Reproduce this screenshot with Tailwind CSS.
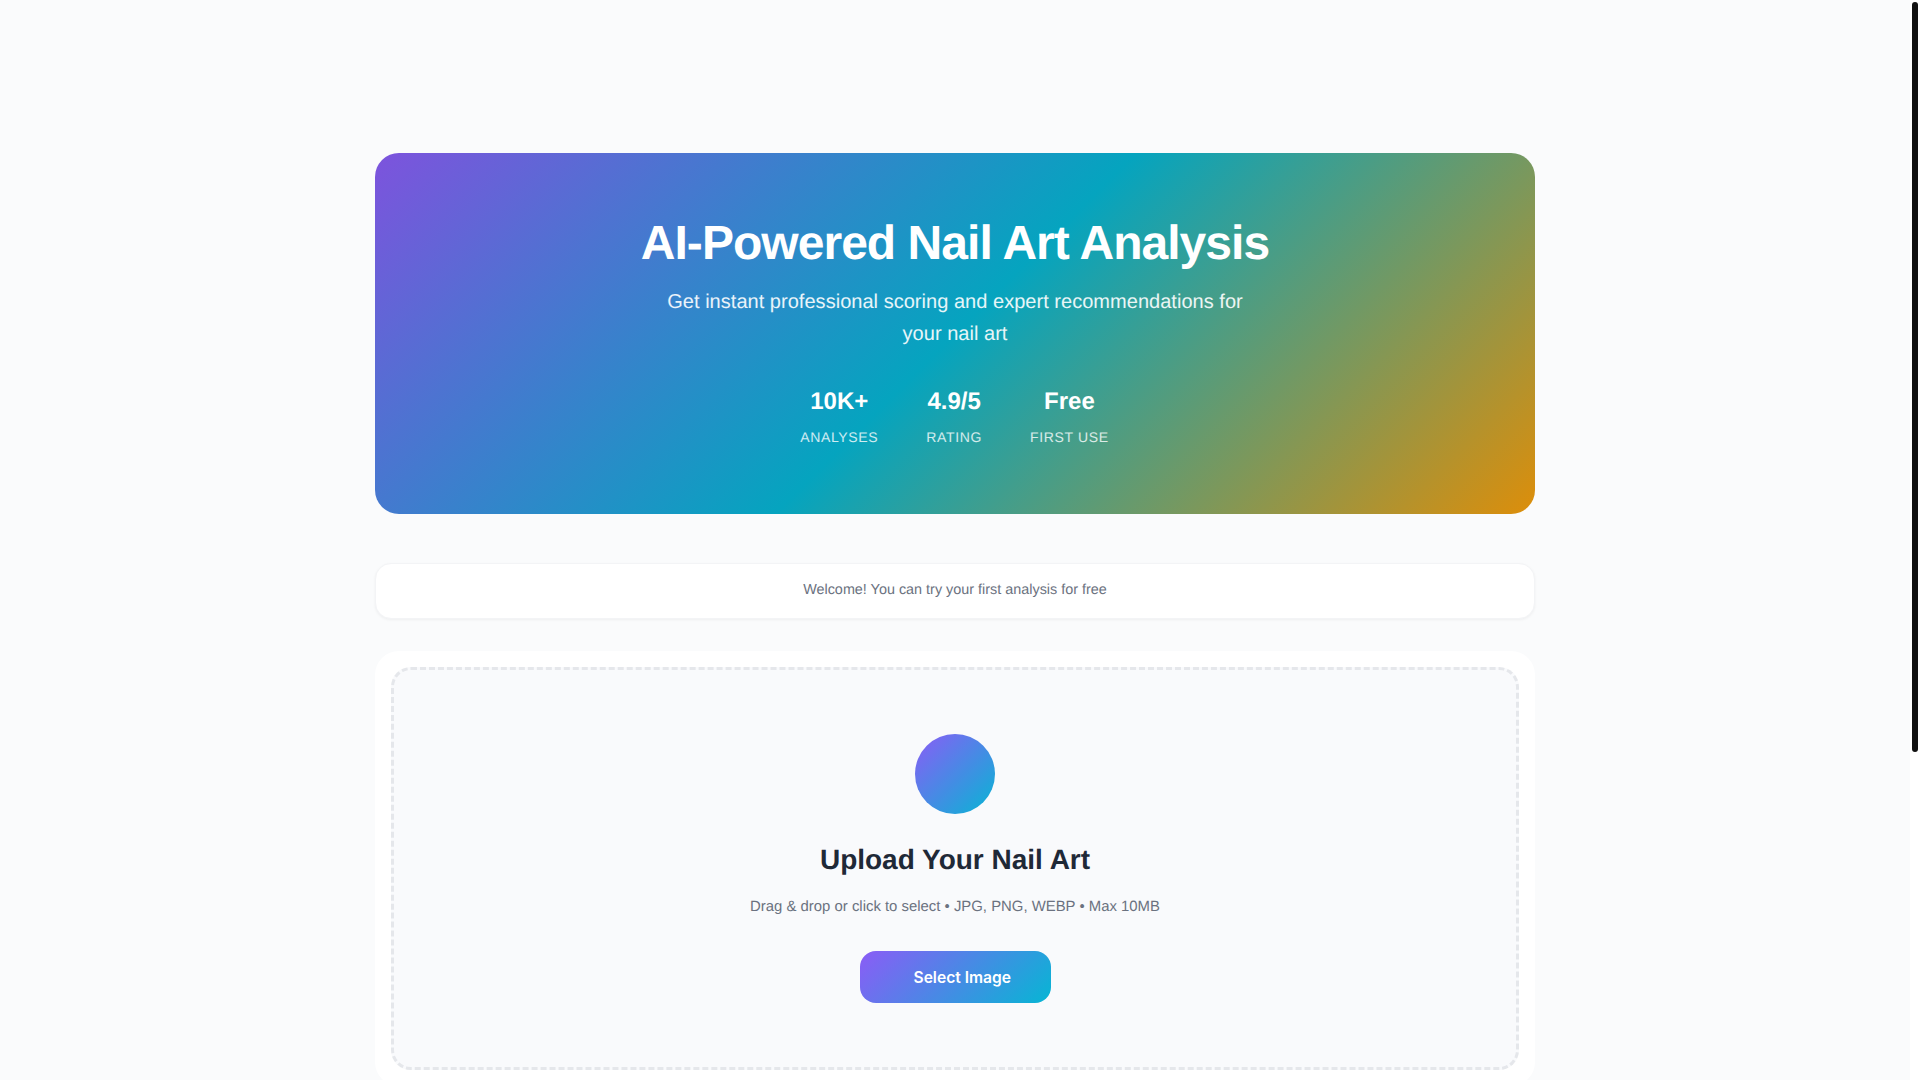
<!DOCTYPE html>
<html lang="en">
<head>
  <meta charset="UTF-8">
  <meta name="viewport" content="width=device-width, initial-scale=1.0">
  <title>AI-Powered Nail Art Analysis</title>
  <script src="https://cdn.jsdelivr.net/npm/@tailwindcss/browser@4"></script>
</head>
<body class="bg-[#fafbfc] pr-[10px] min-h-[1550px] font-['Liberation_Sans',sans-serif] leading-[1.6] antialiased [text-rendering:geometricPrecision]">
  <main class="w-[1160px] mx-auto pt-[153px]">
    <!-- Hero -->
    <section class="h-[361px] rounded-3xl bg-[linear-gradient(135deg,#7d53dd,#05a4bf,#dd8e0a)] pt-[62px] text-center text-white">
      <h1 class="text-[48px] font-bold leading-[1.2] tracking-[-0.96px] mb-[13px]">AI-Powered Nail Art Analysis</h1>
      <p class="w-[600px] mx-auto text-[20px] tracking-[0.03px] text-white/90 mb-[33px]">Get instant professional scoring and expert recommendations for your nail art</p>
      <div class="flex justify-center gap-12 -translate-x-[0.5px]">
        <div>
          <div class="text-[24px] font-bold mb-[5px]">10K+</div>
          <div class="text-[14px] tracking-[0.65px] text-white/80">ANALYSES</div>
        </div>
        <div>
          <div class="text-[24px] font-bold mb-[5px]">4.9/5</div>
          <div class="text-[14px] tracking-[0.65px] text-white/80">RATING</div>
        </div>
        <div>
          <div class="text-[24px] font-bold mb-[5px]">Free</div>
          <div class="text-[14px] tracking-[0.65px] text-white/80">FIRST USE</div>
        </div>
      </div>
    </section>

    <!-- Welcome notice -->
    <div class="mt-[49px] h-[56px] flex items-center justify-center rounded-2xl bg-white border border-[#f3f4f6] shadow-[0_1px_3px_rgba(0,0,0,0.05)] text-[14.4px] text-[#6b7280]">
      Welcome! You can try your first analysis for free
    </div>

    <!-- Upload card -->
    <section class="mt-8 p-4 rounded-3xl bg-white">
      <div class="h-[403px] pt-[64px] flex flex-col items-center rounded-[20px] border-[3px] border-dashed border-[#e5e7eb] bg-[#f9fafc]">
        <div class="w-20 h-20 rounded-full bg-[linear-gradient(135deg,#8b5cf6,#06b6d4)]"></div>
        <h2 class="mt-6 text-[28px] font-bold text-[#1f2937]">Upload Your Nail Art</h2>
        <p class="mt-[13px] text-[14.9px] text-[#6b7280]">Drag &amp; drop or click to select • JPG, PNG, WEBP • Max 10MB</p>
        <button class="mt-[31px] h-[52px] w-[191px] pl-[54px] pt-[3px] rounded-2xl bg-[linear-gradient(135deg,#8b5cf6,#06b6d4)] text-left text-white text-[15.6px] font-semibold whitespace-nowrap font-['Inter',sans-serif]">Select Image</button>
      </div>
    </section>
  </main>

  <!-- Scrollbar -->
  <div class="fixed top-0 right-0 bottom-0 w-[10px] bg-white">
    <div class="absolute top-[2px] left-[2px] w-[6px] h-[750px] rounded-[3px] bg-[#111111]"></div>
  </div>
</body>
</html>
